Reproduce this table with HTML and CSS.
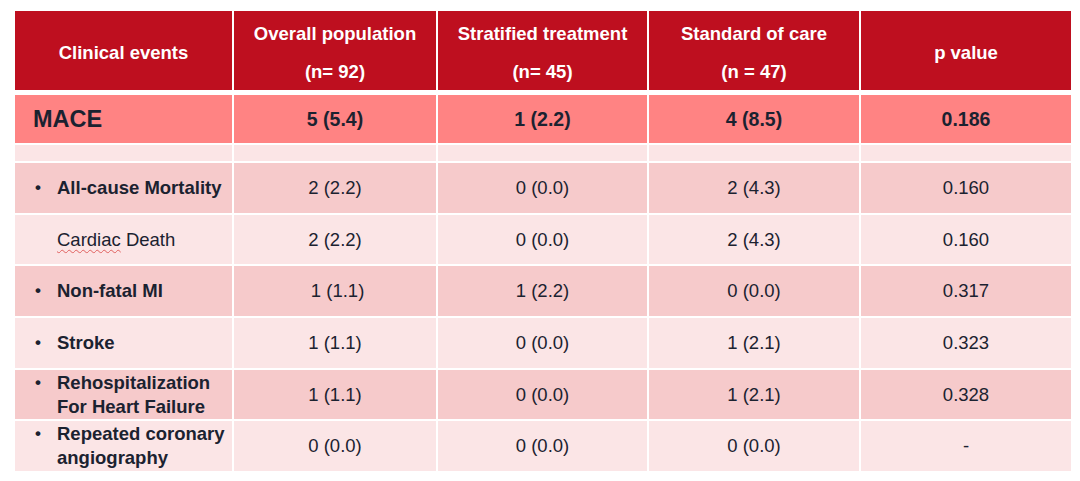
FILE: index.html
```html
<!DOCTYPE html>
<html lang="en">
<head>
<meta charset="utf-8">
<title>Clinical events</title>
<link rel="stylesheet" href="styles.css">
</head>
<body>
<div class="table">
  <div class="cell head">Clinical events</div>
  <div class="cell head">Overall population<br>(n= 92)</div>
  <div class="cell head">Stratified treatment<br>(n= 45)</div>
  <div class="cell head">Standard of care<br>(n = 47)</div>
  <div class="cell head">p value</div>

  <div class="cell mace label-mace">MACE</div>
  <div class="cell mace num bold">5 (5.4)</div>
  <div class="cell mace num bold">1 (2.2)</div>
  <div class="cell mace num bold">4 (8.5)</div>
  <div class="cell mace num bold">0.186</div>

  <div class="cell light"></div>
  <div class="cell light"></div>
  <div class="cell light"></div>
  <div class="cell light"></div>
  <div class="cell light"></div>

  <div class="cell dark label"><span class="bullet">•</span><span class="lbl bold">All-cause Mortality</span></div>
  <div class="cell dark num">2 (2.2)</div>
  <div class="cell dark num">0 (0.0)</div>
  <div class="cell dark num">2 (4.3)</div>
  <div class="cell dark num">0.160</div>

  <div class="cell light label"><span class="bullet"></span><span class="lbl"><span class="spell">Cardiac</span> Death</span></div>
  <div class="cell light num">2 (2.2)</div>
  <div class="cell light num">0 (0.0)</div>
  <div class="cell light num">2 (4.3)</div>
  <div class="cell light num">0.160</div>

  <div class="cell dark label"><span class="bullet">•</span><span class="lbl bold">Non-fatal MI</span></div>
  <div class="cell dark num">&nbsp;1 (1.1)</div>
  <div class="cell dark num">1 (2.2)</div>
  <div class="cell dark num">0 (0.0)</div>
  <div class="cell dark num">0.317</div>

  <div class="cell light label"><span class="bullet">•</span><span class="lbl bold">Stroke</span></div>
  <div class="cell light num">1 (1.1)</div>
  <div class="cell light num">0 (0.0)</div>
  <div class="cell light num">1 (2.1)</div>
  <div class="cell light num">0.323</div>

  <div class="cell dark label"><span class="bullet top">•</span><span class="lbl bold">Rehospitalization<br>For Heart Failure</span></div>
  <div class="cell dark num">1 (1.1)</div>
  <div class="cell dark num">0 (0.0)</div>
  <div class="cell dark num">1 (2.1)</div>
  <div class="cell dark num">0.328</div>

  <div class="cell light label"><span class="bullet top">•</span><span class="lbl bold">Repeated coronary<br>angiography</span></div>
  <div class="cell light num">0 (0.0)</div>
  <div class="cell light num">0 (0.0)</div>
  <div class="cell light num">0 (0.0)</div>
  <div class="cell light num">-</div>
</div>
</body>
</html>
```

FILE: styles.css
```css
html, body {
  margin: 0;
  padding: 0;
  background: #ffffff;
}

body {
  font-family: "Liberation Sans", Arial, sans-serif;
  color: #1b2230;
}

.table {
  margin: 11px 0 0 15px;
  width: 1056px;
  display: grid;
  grid-template-columns: 217px 202px 209px 210px 210px;
  grid-template-rows: 82px 48px 16px repeat(6, 49.7px);
  column-gap: 2px;
  row-gap: 2px;
}

.cell {
  display: flex;
  align-items: center;
  justify-content: center;
  font-size: 18.5px;
  white-space: nowrap;
}

.head {
  background: #be0f1f;
  color: #ffffff;
  font-weight: bold;
  text-align: center;
  line-height: 37.5px;
  padding-top: 4px;
  box-sizing: border-box;
  margin-bottom: 3px;
}

.mace {
  background: #ff8383;
}

.dark {
  background: #f6cacb;
}

.light {
  background: #fbe5e6;
}

.bold {
  font-weight: bold;
}

.num {
  text-align: center;
  font-size: 18.5px;
}

.num.bold {
  font-size: 19.5px;
}

.label-mace {
  justify-content: flex-start;
  padding-left: 18px;
  font-size: 23.5px;
  font-weight: bold;
}

.label {
  justify-content: flex-start;
  padding-left: 20px;
}

.bullet {
  width: 22px;
  flex: none;
  font-size: 17px;
  font-weight: bold;
}

.bullet.top {
  align-self: flex-start;
  margin-top: 3px;
}

.lbl {
  line-height: 24px;
}

.lbl.bold {
  font-size: 18.5px;
}

.spell {
  text-decoration: underline wavy #e0605f;
  text-decoration-thickness: 1px;
  text-underline-offset: 3px;
}
```
